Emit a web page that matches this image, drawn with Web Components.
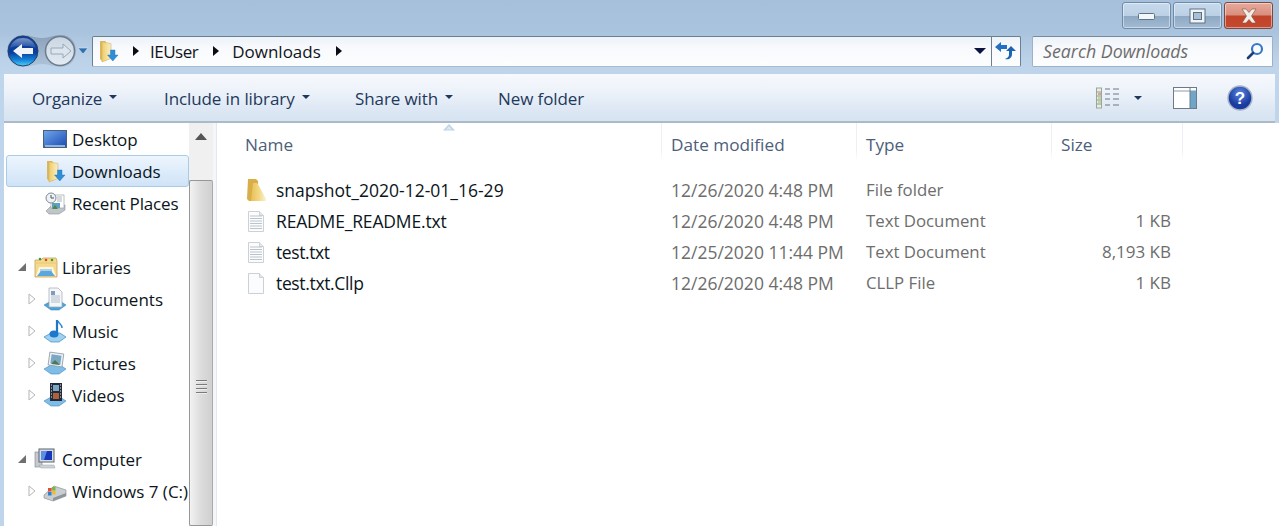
<!DOCTYPE html>
<html><head><meta charset="utf-8"><title>Downloads</title>
<style>
html,body{margin:0;padding:0;height:526px;overflow:hidden;background:#fff;font-family:"Open Sans","Noto Sans",sans-serif}
</style></head><body>
<win-explorer></win-explorer>
<script>
const ICONS={
folderdl:`<svg viewBox="0 0 24 24" width="24" height="24"><defs><linearGradient id="f" x1="0" x2="1"><stop offset="0" stop-color="#eccb6c"/><stop offset=".6" stop-color="#f7e3a0"/><stop offset="1" stop-color="#f3ead0"/></linearGradient></defs><path d="M4 2h5l1 1v19l-4 0-2-2z" fill="#dcb65a"/><path d="M6 3l9 1.500v15L6 23z" fill="url(#f)" stroke="#d7b563" stroke-width=".6"/><path d="M14.500 11h4.500v5h3l-5.200 6-5.300-6h3z" fill="#2f8fd6" stroke="#1d6fb2" stroke-width=".4"/></svg>`,
folder:`<svg viewBox="0 0 22 24" width="22" height="24"><defs><linearGradient id="g" x1="0" x2="1"><stop offset="0" stop-color="#e8c057"/><stop offset=".55" stop-color="#f3d985"/><stop offset="1" stop-color="#f9f2d6"/></linearGradient></defs><path d="M3 1h8l2 2v15l-5 5H4l-2-2z" fill="#d9ae48"/><path d="M8 5h4l2 3 7 13v2H6z" fill="url(#g)"/></svg>`,
desktop:`<svg viewBox="0 0 24 24" width="24" height="24"><defs><linearGradient id="d" x1="0" y1="0" x2="1" y2="1"><stop offset="0" stop-color="#6fa4ec"/><stop offset="1" stop-color="#1e4fb4"/></linearGradient></defs><rect x="0" y="3" width="24" height="18" fill="#4a5f78"/><rect x="1" y="4" width="22" height="15" fill="url(#d)"/><path d="M2 18h20v2H2z" fill="#8fb5dd"/></svg>`,
recent:`<svg viewBox="0 0 24 24" width="24" height="24"><path d="M3 20l6-6h13v5l-6 4H6z" fill="#bfc5cb" stroke="#8b9298" stroke-width=".6"/><rect x="8" y="4" width="13" height="13" fill="#fff" stroke="#9aa1a8" stroke-width=".7"/><path d="M14 6h5M14 8h5M14 10h5" stroke="#9aa1a8" stroke-width=".8"/><rect x="9" y="12" width="8" height="5" fill="#5f9fc0"/><path d="M9 18l3-4 3 4z" fill="#4e8a3c"/><circle cx="8" cy="7" r="5" fill="#eef2f5" stroke="#7f8a95"/><path d="M8 4v3h3" fill="none" stroke="#4b5560"/></svg>`,
libraries:`<svg viewBox="0 0 26 24" width="26" height="24"><path d="M2 5h6l2-2h13l1 3v16H2z" fill="#f5d98c" stroke="#c8a35a" stroke-width=".8"/><path d="M2 8h22" stroke="#e8c877"/><circle cx="7" cy="4" r="1.300" fill="#3c9a46"/><circle cx="13" cy="5" r="1.300" fill="#d14a3a"/><circle cx="19" cy="5" r="1.300" fill="#3c9a46"/><path d="M3 21l3-9h14l3 9z" fill="#fff6d8"/><path d="M7 14h12v5H7z" fill="#a9d3ee"/><path d="M4 21l4-5h10l4 5z" fill="#5aa7dc"/></svg>`,
docs:`<svg viewBox="0 0 24 24" width="24" height="24"><path d="M1 18l7-4h9l6 4-7 5H8z" fill="#4da3dc" stroke="#2b7fb9" stroke-width=".5"/><path d="M6 1h9l4 4v15H6z" fill="#f4f6f8" stroke="#a0a8b0" stroke-width=".7"/><path d="M8 9h9M8 11h9M8 13h9M8 15h9" stroke="#9fb1c4" stroke-width=".8"/><rect x="8" y="4" width="4" height="4" fill="#7e9cc0"/></svg>`,
music:`<svg viewBox="0 0 24 24" width="24" height="24"><path d="M1 18l7-4h9l6 4-7 5H8z" fill="#9fd0ef" stroke="#3b8cc5" stroke-width=".7"/><path d="M14 1v13.500" stroke="#1d76c8" stroke-width="2.200" fill="none"/><ellipse cx="11" cy="15" rx="4.500" ry="3.600" fill="#1c78cc"/><path d="M15 2c1 3 4 3 4 7" stroke="#2b88d8" stroke-width="1.500" fill="none"/></svg>`,
pictures:`<svg viewBox="0 0 24 24" width="24" height="24"><path d="M1 18l7-4h9l6 4-7 5H8z" fill="#7fbde6" stroke="#3b8cc5" stroke-width=".6"/><rect x="6" y="2" width="14" height="13" transform="rotate(8 13 8)" fill="#eef2f6" stroke="#8d99a5" stroke-width=".8"/><rect x="8" y="4" width="10" height="9" transform="rotate(8 13 8)" fill="#7aa7c4"/><path d="M8 13l4-4 5 5z" fill="#4b7a52"/></svg>`,
videos:`<svg viewBox="0 0 24 24" width="24" height="24"><path d="M1 18l7-4h9l6 4-7 5H8z" fill="#7fbde6" stroke="#3b8cc5" stroke-width=".6"/><rect x="7" y="0" width="12" height="18" fill="#232b38"/><rect x="10" y="2" width="6" height="6" fill="#7aa7c4"/><rect x="10" y="10" width="6" height="6" fill="#b0603a"/><path d="M8 2h1M8 5h1M8 8h1M8 11h1M8 14h1M17 2h1M17 5h1M17 8h1M17 11h1M17 14h1" stroke="#dfe6ee"/></svg>`,
computer:`<svg viewBox="0 0 24 24" width="24" height="24"><rect x="2" y="5" width="7" height="15" fill="#c4cad0" stroke="#7b838b" stroke-width=".6"/><rect x="6" y="2" width="15" height="13" fill="#d8dde2" stroke="#5c656e"/><rect x="8" y="4" width="11" height="9" fill="#1537b8"/><path d="M8 4h6l-3 9H8z" fill="#5e8fe6"/><path d="M6 18h15l1 3H8z" fill="#cfd4d9" stroke="#9aa1a8" stroke-width=".5"/></svg>`,
drive:`<svg viewBox="0 0 24 24" width="24" height="24"><path d="M1 16l10-9 12 4v6l-13 5-9-3z" fill="#c9ced2" stroke="#80888f" stroke-width=".6"/><path d="M10 22l13-5v-3l-13 5z" fill="#8d959b"/><rect x="5" y="9" width="3.500" height="3.500" fill="#e2502e"/><rect x="9" y="8" width="3.500" height="3.500" fill="#7cb542"/><rect x="5" y="13" width="3.500" height="3.500" fill="#2f7fd2"/><rect x="9" y="12" width="3.500" height="3.500" fill="#f2bb2c"/></svg>`,
txt:`<svg viewBox="0 0 20 24" width="20" height="24"><path d="M2.500 2.500h11l4 4v16h-15z" fill="#fbfcfd" stroke="#cdd1d5"/><path d="M13.500 2.500v4h4" fill="#e6e9ec" stroke="#cdd1d5"/><path d="M4 7h12M4 9.500h12M4 12h12M4 14.500h12M4 17h12M4 19.500h12" stroke="#bcc3ca" stroke-width="1"/></svg>`,
blank:`<svg viewBox="0 0 20 24" width="20" height="24"><path d="M2.500 2.500h11l4 4v16h-15z" fill="#fbfcfd" stroke="#cdd1d5"/><path d="M13.500 2.500v4h4" fill="#e6e9ec" stroke="#cdd1d5"/></svg>`
};
const def=(n,html,extra)=>{customElements.define(n,class extends HTMLElement{
  constructor(){super();this.attachShadow({mode:'open'}).innerHTML=html;}
  connectedCallback(){extra&&extra(this)}
});};

customElements.define('win-icon',class extends HTMLElement{
  static get observedAttributes(){return ['name']}
  constructor(){super();this.attachShadow({mode:'open'}).innerHTML=`<style>:host{display:inline-flex;align-items:center;justify-content:center;width:24px;height:24px;flex:none}svg{display:block}</style><span id="i" style="display:contents"></span>`;}
  attributeChangedCallback(){this.shadowRoot.getElementById('i').innerHTML=ICONS[this.getAttribute('name')]||''}
});

def('win-caption',`<style>
:host{display:flex;justify-content:flex-end;gap:2px;height:30px;box-sizing:border-box;padding:2px 6px 0 0}
.b{width:49px;height:27px;box-sizing:border-box;border:1px solid #6e8ba8;border-radius:3px;display:flex;align-items:center;justify-content:center;background:linear-gradient(#c7d9ec 0,#bcd0e5 50%,#8ea9c4 52%,#a3bbd3 100%);box-shadow:inset 0 0 0 1px rgba(255,255,255,.45)}
.c{border-color:#7a4a40;background:linear-gradient(#e6a99a 0,#d88f7e 48%,#c1432a 52%,#c4492e 100%)}
</style>
<div class="b"><svg width="18" height="10"><rect x=".5" y="2.500" width="16" height="6" rx="1" fill="#f4f7fa" stroke="#5d7286"/></svg></div>
<div class="b"><svg width="18" height="16"><rect x="1" y="1" width="15" height="14" fill="#f1f4f7" stroke="#5d7286"/><rect x="4.500" y="4.500" width="8" height="7" fill="#a9bfd6" stroke="#5d7286"/></svg></div>
<div class="b c"><svg width="20" height="16" viewBox="0 0 20 16"><path d="M3 1h4l3 3.500L13 1h4l-4.500 7 4.500 7h-4l-3-3.500L7 15H3l4.500-7z" fill="#efeee9" stroke="#8a4c3e" stroke-width=".6"/></svg></div>`);

def('win-nav',`<style>
:host{display:flex;align-items:center;height:44px;box-sizing:border-box;padding:0 6px 2px 7px}
.addr{flex:1;margin-left:3px;height:31px;box-sizing:border-box;border:1px solid #6b7f92;border-bottom-color:#a9bccd;border-radius:2px;background:linear-gradient(#edf3f9,#f8fafd 40%,#fcfdfe);display:flex;align-items:center;font-size:17px;color:#11151a}
.addr win-icon{margin-left:3px}
.t{display:inline-block;flex:none;width:0;height:0;border-left:6px solid #0c0c14;border-top:5px solid transparent;border-bottom:5px solid transparent}
.end{margin-left:auto;display:flex;align-items:center;height:100%}
.dd{width:0;height:0;border-top:6px solid #0b1440;border-left:6px solid transparent;border-right:6px solid transparent;margin-right:5px}
.rf{border-left:1px solid #6b7f92;box-sizing:border-box;height:100%;width:29px;display:flex;align-items:center;justify-content:center}
.search{width:241px;height:31px;box-sizing:border-box;margin-left:11px;border:1px solid #9fb2c5;border-top-color:#788b9e;border-radius:2px;background:linear-gradient(#edf3f9,#f8fafd 40%,#fcfdfe);display:flex;align-items:center;justify-content:space-between;padding:0 7px 0 10px;font-size:17.800px;font-style:italic;color:#6d6d6d;flex:none}
</style>
<svg width="70" height="34" viewBox="0 0 70 34" style="flex:none"><defs>
<linearGradient id="pl" x1="0" y1="0" x2="0" y2="1"><stop offset="0" stop-color="#7f95ad"/><stop offset="1" stop-color="#a8bfd6"/></linearGradient>
<linearGradient id="bk" x1="0" y1="0" x2="0" y2="1"><stop offset="0" stop-color="#0e3f99"/><stop offset=".55" stop-color="#0a3f9c"/><stop offset=".8" stop-color="#1585d8"/><stop offset="1" stop-color="#4fd0f8"/></linearGradient>
<linearGradient id="gl" x1="0" y1="0" x2="0" y2="1"><stop offset="0" stop-color="#fff" stop-opacity=".45"/><stop offset="1" stop-color="#fff" stop-opacity=".08"/></linearGradient>
<linearGradient id="fw" x1="0" y1="0" x2="0" y2="1"><stop offset="0" stop-color="#c9d6e3"/><stop offset="1" stop-color="#e3ebf3"/></linearGradient>
</defs>
<path d="M16 1c8 0 11 3 19 3s10-3 19-3c9 0 15 7 15 16s-6 16-15 16c-9 0-11-3-19-3s-11 3-19 3C7 33 0 26 0 17S7 1 16 1z" fill="url(#pl)" opacity=".75"/>
<circle cx="16" cy="17" r="15" fill="url(#bk)" stroke="#23406e"/><path d="M3 14c2-7 7-10 13-10s11 3 13 10c-8-3-18-3-26 0z" fill="url(#gl)"/>
<path d="M6 17l9-7v4h11v6H15v4z" fill="#f1f5fa"/>
<circle cx="53" cy="17" r="14.500" fill="url(#fw)" stroke="#6d7b8a" stroke-width="1.500"/><path d="M64 17l-8-7v4H44v6h12v4z" fill="#dce5ee" stroke="#9aa8b6"/></svg>
<svg width="12" height="10" style="margin-left:0;flex:none"><path d="M1 2h10l-5 6z" fill="#2d6fb0" stroke="#dce8f3" stroke-width=".6"/></svg>
<div class="addr"><win-icon name="folderdl"></win-icon><i class="t" style="margin:0 11px 0 13px"></i><span style="letter-spacing:-.5px">IEUser</span><i class="t" style="margin:0 13px 0 15px"></i><span>Downloads</span><i class="t" style="margin-left:15px"></i>
<div class="end"><i class="dd"></i><div class="rf"><svg width="22" height="20" viewBox="0 0 22 20"><path d="M0 6l6-5v3h6v4H6v3z" fill="#2270c4"/><path d="M21 10l-5-5-5 5h3v4c0 2-2 3-4 4 4 1 7-1 7-5v-3z" fill="#1b64b3"/></svg></div></div></div>
<div class="search"><span>Search Downloads</span><svg width="20" height="20" viewBox="0 0 20 20"><circle cx="12" cy="8" r="5" fill="none" stroke="#3a78c4" stroke-width="2.200"/><path d="M8 12l-5 5" stroke="#1c3e78" stroke-width="2.600" stroke-linecap="round"/></svg></div>`);

def('win-cmd',`<style>
:host{display:flex;align-items:center;height:49px;box-sizing:border-box;padding-top:1px;margin:0 4px;background:linear-gradient(#f6f9fd 0,#eef3fa 35%,#dfe9f5 70%,#d7e3f1 100%);border-bottom:2px solid #a9bac9;font-size:17px;color:#1e395b;letter-spacing:-.1px}
.m{display:flex;align-items:center;flex:none}
.a{width:0;height:0;border-top:4px solid #1e395b;border-left:4px solid transparent;border-right:4px solid transparent;margin-left:7px;margin-top:-2px}
.r{margin-left:auto;display:flex;align-items:center}
</style>
<div class="m" style="margin-left:28px;width:132px">Organize<i class="a"></i></div>
<div class="m" style="width:191px">Include in library<i class="a"></i></div>
<div class="m" style="width:143px">Share with<i class="a"></i></div>
<div class="m">New folder</div>
<div class="r">
<svg width="24" height="22" viewBox="0 0 24 22"><rect x=".5" y="1" width="5" height="20" fill="#e9efdc" stroke="#9aa69c"/><path d="M1 5h4M1 9h4M1 13h4M1 17h4" stroke="#8d9a8f"/><path d="M2 7h3" stroke="#c85a4a"/><path d="M2 11h3M2 15h3" stroke="#9db85c"/><path d="M9 2h5M17 2h6M9 7h5M17 7h6M9 12h5M17 12h6M9 18h5M17 18h6" stroke="#6d7885" stroke-width="1.200"/></svg>
<i class="a" style="margin-left:14px;margin-top:0;margin-right:31px"></i>
<svg width="24" height="22" viewBox="0 0 24 22"><rect x=".5" y=".5" width="23" height="21" fill="#fff" stroke="#6d7b88"/><path d="M1 4h22" stroke="#8d9aa6"/><rect x="17" y="4" width="6" height="17" fill="#6da6c9"/><path d="M17 1v20" stroke="#6d7b88"/></svg>
<svg style="margin-left:30px;margin-right:22px" width="26" height="26" viewBox="0 0 26 26"><defs><radialGradient id="h" cy=".3"><stop offset="0" stop-color="#5b86dd"/><stop offset="1" stop-color="#1a3ca0"/></radialGradient></defs><circle cx="13" cy="13" r="12" fill="url(#h)" stroke="#aab6c6" stroke-width="1.500"/><text x="13" y="19" font-family="Liberation Sans" font-weight="700" font-size="17" fill="#fff" text-anchor="middle">?</text></svg>
</div>`);

def('tree-item',`<style>
:host{display:flex;align-items:center;height:32px;box-sizing:border-box;font-size:17px;color:#0b1520;white-space:nowrap;overflow:hidden}
.tw{width:12px;flex:none;display:flex;justify-content:center}
.text{margin-left:5px}
:host([selected]){border:1px solid #a9cbe8;border-radius:3px;background:linear-gradient(#edf5fd,#cfe3f7);margin-left:2px}
</style><span id="sp" style="flex:none"></span><span class="tw" id="tw"></span><win-icon id="ic" style="margin-left:5px"></win-icon><span class="text" id="tx"><slot></slot></span>`,
el=>{const r=el.shadowRoot,lvl=+el.getAttribute('level')||0,t=el.getAttribute('twisty'),ic=el.getAttribute('icon');
 r.getElementById('sp').style.width=(lvl?(el.hasAttribute('selected')?19:22):12)+'px';
 r.getElementById('ic').setAttribute('name',ic);
 if(ic==='libraries'){r.getElementById('ic').style.width='26px';r.getElementById('tx').style.marginLeft='3px'}
 const tw=r.getElementById('tw');
 if(t==='open')tw.innerHTML='<svg width="10" height="10" viewBox="0 0 10 10"><path d="M9 1v8H1z" fill="#6f6f6f"/></svg>';
 if(t==='closed')tw.innerHTML='<svg width="8" height="12" viewBox="0 0 8 12"><path d="M1 1l6 5-6 5z" fill="#fff" stroke="#b5b5b5"/></svg>';
});

def('win-scrollbar',`<style>
:host{display:flex;flex-direction:column;width:24px;box-sizing:border-box;background:#f0f0f0;flex:none;position:relative}
.up{height:57px;box-sizing:border-box;padding-top:10px;display:flex;justify-content:center;flex:none}
.th{flex:1;border:1px solid #979797;border-radius:2px;border-right-color:#aaa;background:linear-gradient(90deg,#f2f2f2,#dcdcdc 50%,#d0d0d0);display:flex;align-items:center;justify-content:center}
.gr{display:flex;flex-direction:column;gap:2px;margin-top:67px}
.gr i{display:block;width:11px;height:1px;background:#7a7a7a;border-bottom:1px solid #eee}
</style><div class="up"><svg width="12" height="7"><path d="M6 0l6 7H0z" fill="#555"/></svg></div><div class="th"><div class="gr"><i></i><i></i><i></i><i></i></div></div>`);

def('win-navpane',`<style>
:host{display:flex;width:209px;flex:none;background:#fff;overflow:hidden}
.col{width:185px;flex:none;box-sizing:border-box;overflow:hidden}
</style><div class="col"><slot></slot></div><win-scrollbar></win-scrollbar>`);

def('file-row',`<style>
:host{display:grid;grid-template-columns:426px 195px 195px 126px;height:31px;align-items:center;font-size:17.500px;color:#6d6d6d;white-space:nowrap}
.n{display:flex;align-items:center;color:#0b1520}
.n win-icon{width:22px;margin-right:9px}
#t{font-size:16.800px}
.sz{text-align:right;padding-right:16px;font-size:17px}
</style><div class="n"><win-icon id="ic"></win-icon><slot></slot></div><div id="d"></div><div id="t"></div><div class="sz" id="s"></div>`,
el=>{const r=el.shadowRoot;r.getElementById('ic').setAttribute('name',el.getAttribute('icon'));
 r.getElementById('d').textContent=el.getAttribute('date');r.getElementById('t').textContent=el.getAttribute('type');r.getElementById('s').textContent=el.getAttribute('size')||'';});

def('file-list',`<style>
:host{display:block;flex:1;min-width:0;background:#fff;position:relative;margin-right:4px}
.h{display:grid;grid-template-columns:445px 195px 195px 131px;height:46px;font-size:17.200px;color:#4c607a;box-sizing:border-box}
.h div{display:flex;align-items:center;padding:5px 0 0 9px;height:37px;box-sizing:border-box;border-right:1px solid;border-image:linear-gradient(#eceff3,#eceff3 70%,#fff) 1}
.h div:first-child{padding-left:28px}
.rows{padding-left:28px;padding-top:5px}
.sort{position:absolute;left:226px;top:1px}
</style>
<svg class="sort" width="12" height="7"><path d="M6 0l6 6.500H0z" fill="#bcd3e6"/><path d="M6 2l3 3.500H3z" fill="#dce9f3"/></svg>
<div class="h"><div>Name</div><div>Date modified</div><div>Type</div><div>Size</div></div>
<div class="rows"><slot></slot></div>`);

def('win-explorer',`<style>
:host{display:flex;flex-direction:column;width:1279px;height:526px;overflow:hidden;background:linear-gradient(#a6bfdb 0,#a9c2dd 30px,#bcd2e8 60px,#bfd5ec 74px)}
.main{flex:1;display:flex;min-height:0;margin-left:4px;background:#fff}
.split{width:4px;flex:none;background:#f4f6fa;border-right:1px solid #e3e7ee;box-sizing:border-box}
</style>
<win-caption></win-caption><win-nav></win-nav><win-cmd></win-cmd>
<div class="main">
<win-navpane>
<tree-item level="1" icon="desktop">Desktop</tree-item>
<tree-item level="1" icon="folderdl" selected>Downloads</tree-item>
<tree-item level="1" icon="recent"><span style="letter-spacing:-.15px">Recent Places</span></tree-item>
<div style="height:32px"></div>
<tree-item twisty="open" icon="libraries">Libraries</tree-item>
<tree-item level="1" twisty="closed" icon="docs">Documents</tree-item>
<tree-item level="1" twisty="closed" icon="music">Music</tree-item>
<tree-item level="1" twisty="closed" icon="pictures">Pictures</tree-item>
<tree-item level="1" twisty="closed" icon="videos">Videos</tree-item>
<div style="height:32px"></div>
<tree-item twisty="open" icon="computer">Computer</tree-item>
<tree-item level="1" twisty="closed" icon="drive">Windows 7 (C:)</tree-item>
</win-navpane>
<div class="split"></div>
<file-list>
<file-row icon="folder" date="12/26/2020 4:48 PM" type="File folder">snapshot_2020-12-01_16-29</file-row>
<file-row icon="txt" date="12/26/2020 4:48 PM" type="Text Document" size="1 KB"><span style="letter-spacing:-.17px">README_README.txt</span></file-row>
<file-row icon="txt" date="12/25/2020 11:44 PM" type="Text Document" size="8,193 KB"><span style="letter-spacing:-.4px">test.txt</span></file-row>
<file-row icon="blank" date="12/26/2020 4:48 PM" type="CLLP File" size="1 KB"><span style="letter-spacing:-.35px">test.txt.Cllp</span></file-row>
</file-list>
</div>`);
</script></body></html>
